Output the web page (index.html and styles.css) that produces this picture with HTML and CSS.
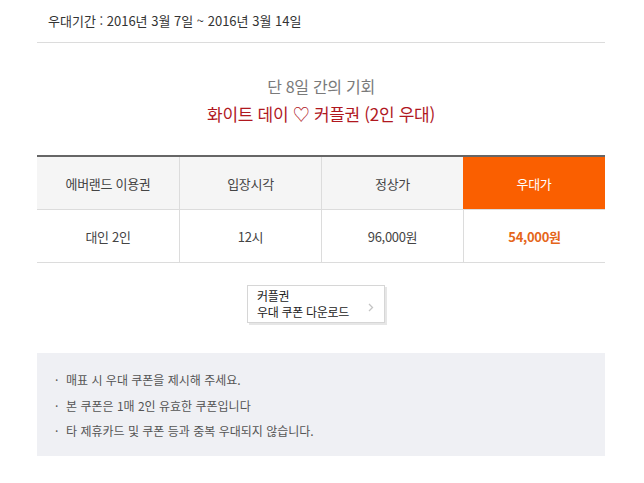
FILE: index.html
```html
<!DOCTYPE html>
<html lang="ko">
<head>
<meta charset="utf-8">
<link rel="stylesheet" href="styles.css">
</head>
<body>
<div class="page">
  <div class="period">우대기간 : 2016년 3월 7일 ~ 2016년 3월 14일</div>
  <div class="title">
    <div class="sub">단 8일 간의 기회</div>
    <div class="main">화이트 데이 ♡ 커플권 (2인 우대)</div>
  </div>
  <div class="table">
    <div class="row head">
      <div class="cell">에버랜드 이용권</div>
      <div class="cell">입장시각</div>
      <div class="cell">정상가</div>
      <div class="cell hl">우대가</div>
    </div>
    <div class="row body">
      <div class="cell">대인 2인</div>
      <div class="cell">12시</div>
      <div class="cell">96,000원</div>
      <div class="cell price">54,000원</div>
    </div>
  </div>
  <div class="btn-wrap">
    <a class="coupon">
      <span class="lines"><span>커플권</span><span>우대 쿠폰 다운로드</span></span>
      <svg class="chev" width="6" height="9" viewBox="0 0 6 9"><path d="M1 1l3.5 3.5L1 8" fill="none" stroke="#c4c4c4" stroke-width="1.3"/></svg>
    </a>
  </div>
  <ul class="notes">
    <li>매표 시 우대 쿠폰을 제시해 주세요.</li>
    <li>본 쿠폰은 1매 2인 유효한 쿠폰입니다</li>
    <li>타 제휴카드 및 쿠폰 등과 중복 우대되지 않습니다.</li>
  </ul>
</div>
</body>
</html>
```
FILE: styles.css
```css
* { box-sizing: border-box; }
body {
  margin: 0;
  background: #fff;
  font-family: "Noto Sans CJK KR", "Noto Sans", sans-serif;
  color: #333;
}
.page {
  width: 568px;
  margin-left: 37px;
}
.period {
  height: 43px;
  line-height: 42px;
  padding-left: 11px;
  font-size: 13px;
  color: #333;
  border-bottom: 1px solid #dcdcdc;
}
.title {
  margin-top: 30px;
  text-align: center;
  letter-spacing: -0.3px;
}
.sub {
  font-size: 16px;
  line-height: 27px;
  color: #7a7a7a;
}
.main {
  font-size: 17px;
  line-height: 27px;
  color: #b0181f;
}
.table {
  margin-top: 28px;
  border-top: 2px solid #666;
}
.row {
  display: grid;
  grid-template-columns: repeat(4, 1fr);
  border-bottom: 1px solid #dcdcdc;
}
.cell {
  height: 52px;
  display: flex;
  align-items: center;
  justify-content: center;
  font-size: 13px;
  color: #444;
  border-left: 1px solid #dcdcdc;
  letter-spacing: -0.3px;
}
.cell:first-child { border-left: none; }
.head .cell { background: #f5f5f5; }
.head .cell.hl { background: #fa5f00; color: #fff; border-left: none; }
.price { color: #e5661a; font-weight: bold; }
.btn-wrap {
  padding-top: 22px;
  padding-left: 210px;
}
.coupon {
  width: 138px;
  height: 38px;
  border: 1px solid #d6d6d6;
  box-shadow: 2px 2px 0 #e6e6e6;
  display: flex;
  align-items: center;
  justify-content: space-between;
  padding: 0 10px 0 9px;
  background: #fff;
}
.lines {
  display: flex;
  flex-direction: column;
  font-size: 12px;
  line-height: 16px;
  color: #222;
  letter-spacing: -0.3px;
}
.chev { margin-top: 6px; }
.notes {
  list-style: none;
  margin: 30px 0 0;
  padding: 14px 0 13px 18px;
  background: #eff0f4;
  height: 103px;
}
.notes li {
  font-size: 12px;
  line-height: 25.5px;
  color: #555;
  display: flex;
}
.notes li::before {
  content: "·";
  width: 11px;
  flex: none;
  color: #555;
}
```
